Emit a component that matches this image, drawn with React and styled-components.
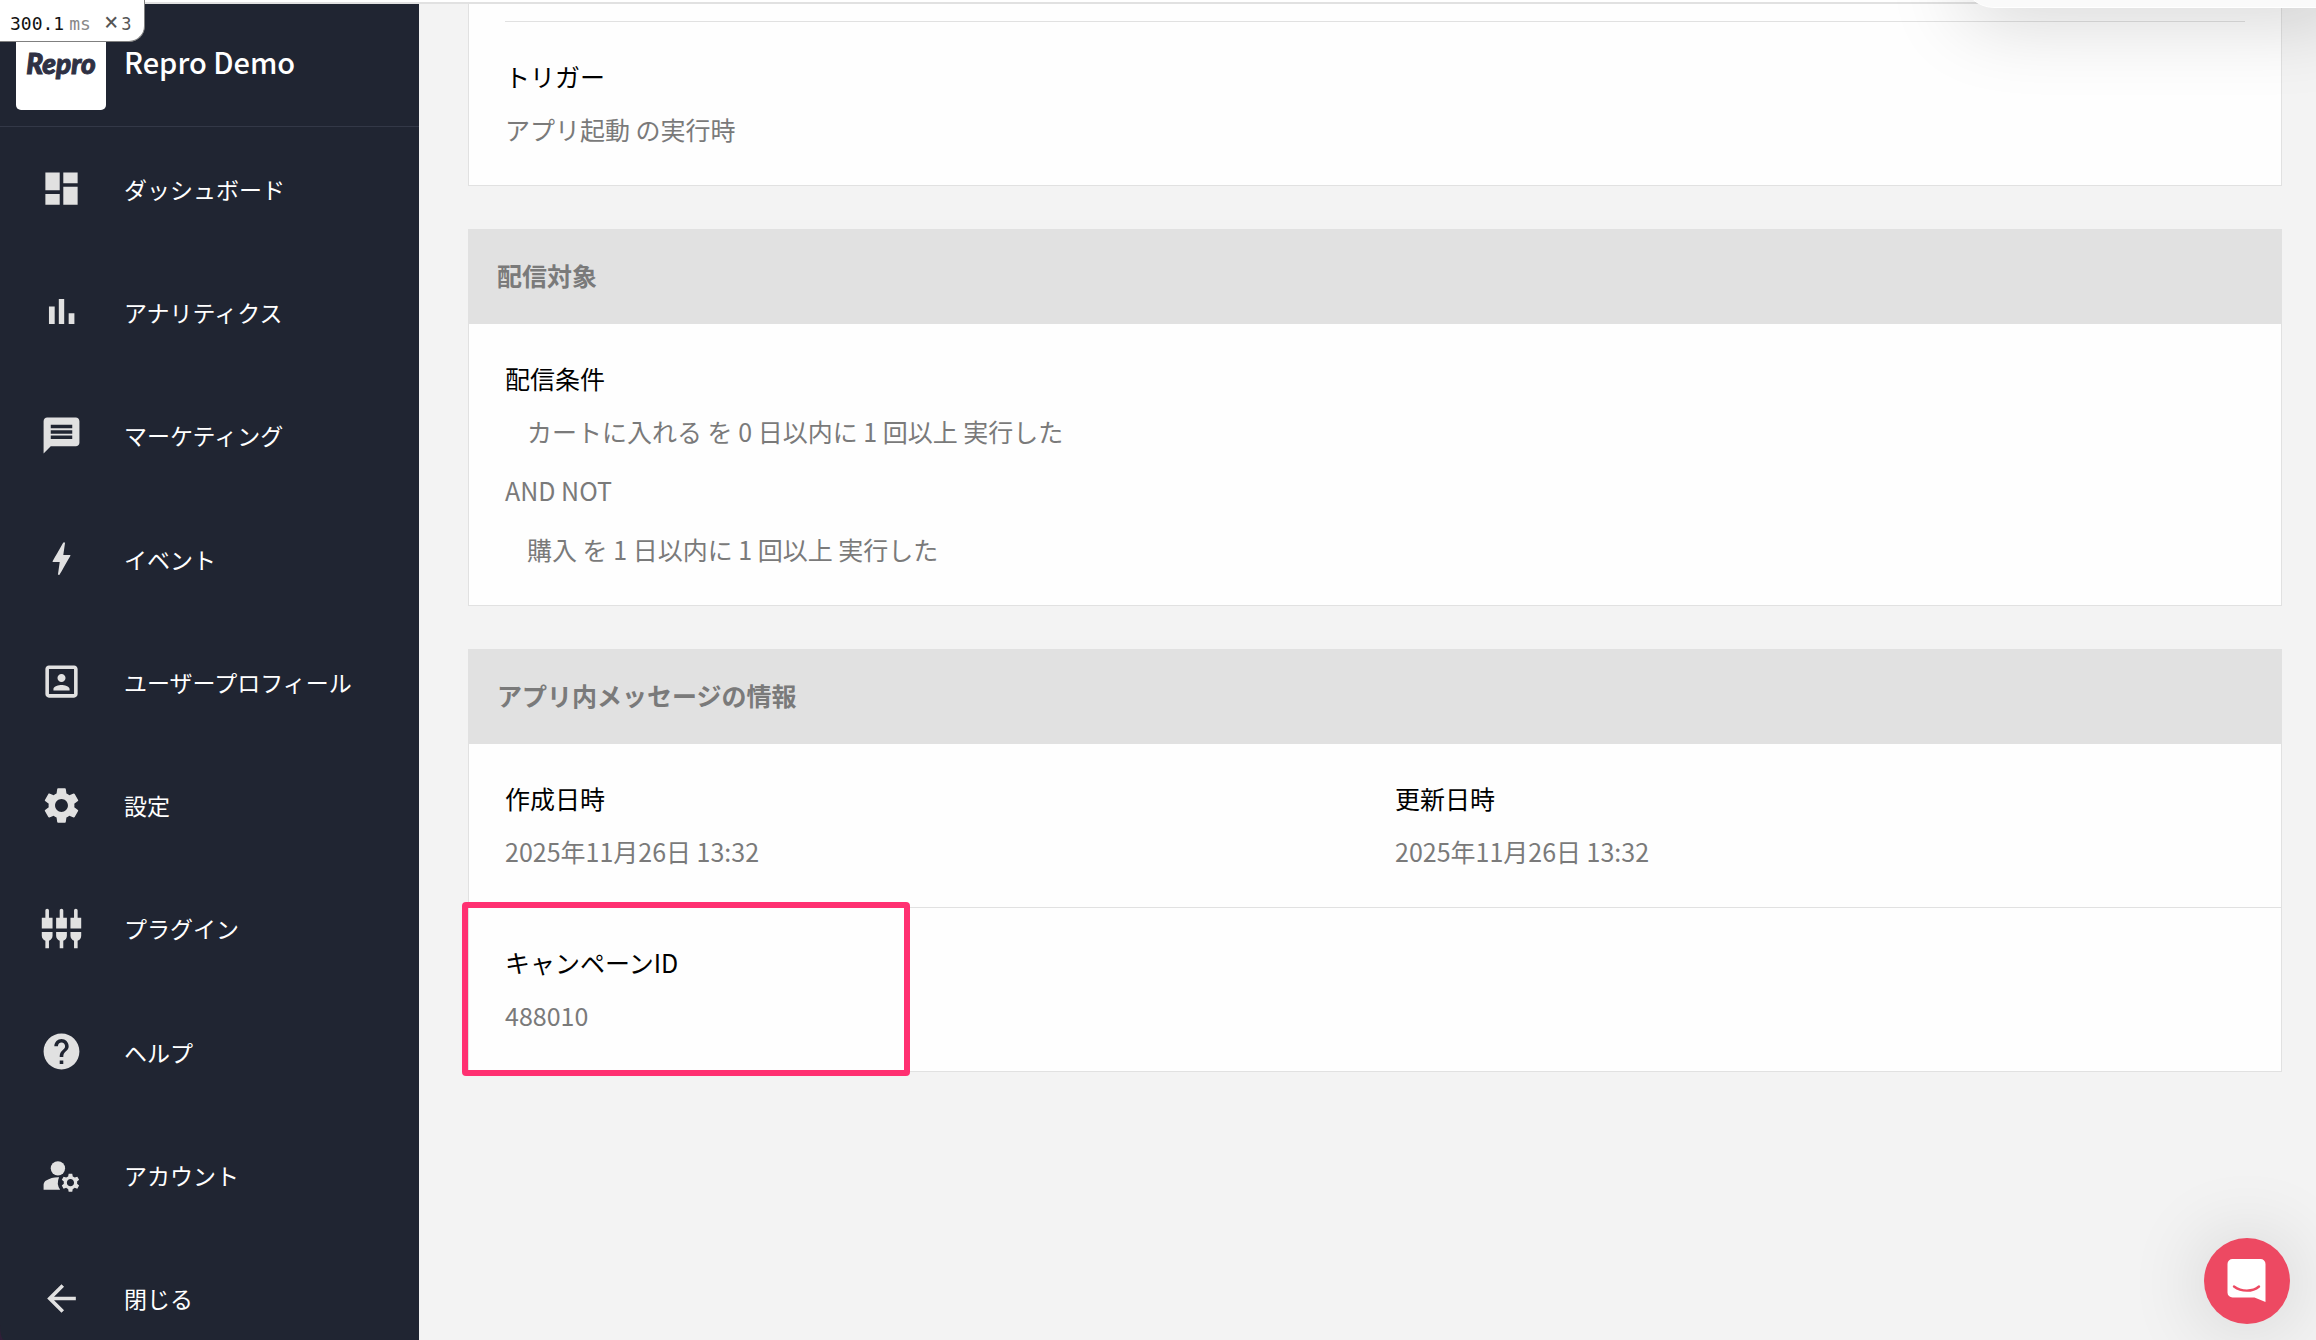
import React from 'react';
import styled, { createGlobalStyle } from 'styled-components';
import {
  MdDashboard,
  MdMessage,
  MdBolt,
  MdPortrait,
  MdSettings,
  MdSettingsInputComponent,
  MdHelp,
  MdManageAccounts,
  MdArrowBack,
} from 'react-icons/md';

const GlobalStyle = createGlobalStyle`
  *, *::before, *::after { box-sizing: border-box; }
  body {
    margin: 0;
    background: #f3f3f3;
    color: #111;
    font-family: "Noto Sans CJK JP", "Noto Sans", sans-serif;
    font-size: 25px;
    line-height: 38px;
  }
  h1, h2, h3, p, dl, dt, dd, ul { margin: 0; padding: 0; }
`;

const Page = styled.div`
  display: flex;
  flex-direction: column;
  height: 100vh;
  overflow: hidden;
`;

const TopStrip = styled.div`
  flex: none;
  height: 4px;
  background: #fff;
  border-bottom: 2px solid #e1e1e1;
`;

const Shell = styled.div`
  flex: 1;
  min-height: 0;
  display: flex;
  background: #301f38;
`;

const Sidebar = styled.aside`
  flex: none;
  width: 419px;
  overflow: hidden;
  border-bottom-left-radius: 4px 15px;
  background: #202532;
  color: #fff;
`;

const Brand = styled.div`
  display: flex;
  align-items: center;
  gap: 18px;
  padding: 16px;
  border-bottom: 1px solid #333847;
`;

const BrandTile = styled.div`
  width: 90px;
  height: 90px;
  display: flex;
  align-items: center;
  justify-content: center;
  padding-bottom: 4px;
  border-radius: 5px;
  background: #fff;
  color: #2f3144;
  font: italic 900 28px/32px Lato, sans-serif;
  -webkit-text-stroke: 1px #2f3144;
`;

const BrandName = styled.h1`
  padding-bottom: 8px;
  font-size: 29px;
  line-height: 40px;
  font-weight: 500;
`;

const Menu = styled.ul`
  display: grid;
  grid-template-rows: repeat(10, 1fr);
  min-height: 1233px;
  list-style: none;
`;

const MenuLink = styled.a`
  display: flex;
  align-items: center;
  gap: 41px;
  height: 100%;
  padding: 0 40px;
  color: #fff;
  font-size: 23px;
  line-height: 32px;
  text-decoration: none;

  svg {
    flex: none;
    width: 43px;
    height: 43px;
    color: #e1e1e1;
  }
`;

const Main = styled.main`
  flex: 1;
  min-width: 0;
  display: flex;
  flex-direction: column;
  gap: 43px;
  padding: 0 34px 40px 49px;
  background: #f3f3f3;
`;

const Card = styled.section`
  border: 1px solid #e1e1e1;
  border-top-width: ${(p) => (p.$continued ? '0' : '1px')};
  background: #fefefe;
`;

const CardHead = styled.h2`
  padding: 26px 28px 30px;
  background: #e1e1e1;
  color: #7a7a7a;
  font-size: 25px;
  line-height: 38px;
  font-weight: 700;
`;

const Row = styled.dl`
  display: grid;
  grid-template-columns: 1fr 1fr;
  column-gap: 40px;
  padding: 35px 36px 37px;

  & + & { border-top: 1px solid #e1e1e1; }
`;

const Rule = styled.hr`
  margin: 17px 36px 0;
  border: 0;
  border-top: 1px solid #e1e1e1;
`;

const Field = styled.div`
  display: flex;
  flex-direction: column;
  gap: 15px;
`;

const Term = styled.dt`
  color: #000;
`;

const Value = styled.dd`
  color: #7a7a7a;
`;

const Conditions = styled.div`
  display: flex;
  flex-direction: column;
  gap: 21px;
`;

const Condition = styled.p`
  padding-left: ${(p) => (p.$nested ? '22px' : '0')};
`;

const Highlighted = styled(Field)`
  position: relative;

  &::after {
    content: "";
    position: absolute;
    inset: -41px auto -42px -43px;
    width: 448px;
    border: 6px solid #ff3071;
    border-radius: 4px;
    pointer-events: none;
  }
`;

const Profiler = styled.div`
  position: absolute;
  top: 0;
  left: 0;
  display: flex;
  align-items: baseline;
  width: 145px;
  height: 42px;
  padding: 10px 0 0 10px;
  border: solid #808080;
  border-width: 0 1px 1px 0;
  border-radius: 0 0 16px 0;
  background: #fff;
  color: #111;
  font: 18px/24px "DejaVu Sans Mono", monospace;
`;

const Unit = styled.span`
  margin-left: 5px;
  color: #888;
`;

const Times = styled.span`
  margin-left: 13px;
  color: #555;
  font-size: 24px;
`;

const Count = styled.span`
  margin-left: 3px;
  color: #555;
  font-size: 17px;
`;

const Panel = styled.div`
  position: absolute;
  top: -60px;
  right: -40px;
  width: 394px;
  height: 68px;
  border: 1px solid #fff;
  border-radius: 32px;
  background: #fafafa;
  box-shadow: 0 10px 80px rgba(0, 0, 0, 0.18);
`;

const ChatButton = styled.button`
  position: absolute;
  right: 26px;
  bottom: 16px;
  width: 86px;
  height: 86px;
  padding: 0;
  border: 0;
  border-radius: 50%;
  background: #ed4962;
  box-shadow: 0 2px 80px rgba(0, 0, 0, 0.16);

  svg { display: block; }
`;

const BarChart = () => (
  <svg viewBox="0 0 24 24" fill="currentColor" aria-hidden="true">
    <path d="M5 9.200h3.200V19H5zM10.500 5h3v14h-3zM16 13h3.200v6H16z" />
  </svg>
);

const menu = [
  ['ダッシュボード', MdDashboard],
  ['アナリティクス', BarChart],
  ['マーケティング', MdMessage],
  ['イベント', MdBolt],
  ['ユーザープロフィール', MdPortrait],
  ['設定', MdSettings],
  ['プラグイン', MdSettingsInputComponent],
  ['ヘルプ', MdHelp],
  ['アカウント', MdManageAccounts],
  ['閉じる', MdArrowBack],
];

export default function App() {
  return (
    <Page>
      <GlobalStyle />
      <TopStrip />
      <Shell>
        <Sidebar>
          <Brand>
            <BrandTile>Repro</BrandTile>
            <BrandName>Repro Demo</BrandName>
          </Brand>
          <nav>
            <Menu>
              {menu.map(([label, Icon]) => (
                <li key={label}>
                  <MenuLink href="#">
                    <Icon />
                    {label}
                  </MenuLink>
                </li>
              ))}
            </Menu>
          </nav>
        </Sidebar>
        <Main>
          <Card $continued>
            <Rule />
            <Row>
              <Field>
                <Term>トリガー</Term>
                <Value>アプリ起動 の実行時</Value>
              </Field>
            </Row>
          </Card>
          <Card>
            <CardHead>配信対象</CardHead>
            <Row>
              <Field>
                <Term>配信条件</Term>
                <Value>
                  <Conditions>
                    <Condition $nested>カートに入れる を 0 日以内に 1 回以上 実行した</Condition>
                    <Condition>AND NOT</Condition>
                    <Condition $nested>購入 を 1 日以内に 1 回以上 実行した</Condition>
                  </Conditions>
                </Value>
              </Field>
            </Row>
          </Card>
          <Card>
            <CardHead>アプリ内メッセージの情報</CardHead>
            <Row>
              <Field>
                <Term>作成日時</Term>
                <Value>2025年11月26日 13:32</Value>
              </Field>
              <Field>
                <Term>更新日時</Term>
                <Value>2025年11月26日 13:32</Value>
              </Field>
            </Row>
            <Row>
              <Highlighted>
                <Term>キャンペーンID</Term>
                <Value>488010</Value>
              </Highlighted>
            </Row>
          </Card>
        </Main>
      </Shell>
      <Panel />
      <Profiler>
        300.1
        <Unit>ms</Unit>
        <Times>×</Times>
        <Count>3</Count>
      </Profiler>
      <ChatButton type="button" aria-label="チャットを開く">
        <svg width="86" height="86" viewBox="0 0 86 86" aria-hidden="true">
          <path
            d="M28.500 21h28a5 5 0 0 1 5 5v38l-11-4.500h-22a5 5 0 0 1-5-5v-28.500a5 5 0 0 1 5-5z"
            fill="#fff"
          />
          <path
            d="M30 48.500c7.500 5.500 18.500 5.500 25 0"
            fill="none"
            stroke="#ed4962"
            strokeWidth="2.400"
            strokeLinecap="round"
          />
        </svg>
      </ChatButton>
    </Page>
  );
}
